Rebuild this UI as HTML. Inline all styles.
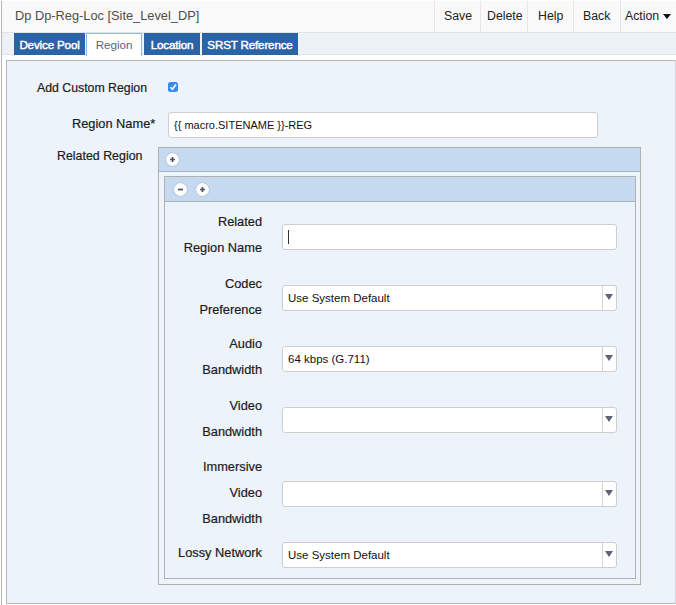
<!DOCTYPE html>
<html><head><meta charset="utf-8">
<style>
html,body{margin:0;padding:0;background:#fff;width:676px;height:605px;overflow:hidden;position:relative;font-family:"Liberation Sans",sans-serif;}
.a{position:absolute;}
#vline{left:1px;top:1px;width:1px;height:604px;background:#b4b4b4;}
#header{left:2px;top:1px;width:674px;height:31px;background:#f9f9f9;border-bottom:1px solid #e3e3e3;}
#title{left:15px;top:6px;font-size:12.8px;color:#4d4d4d;white-space:nowrap;line-height:20px;}
.sep{top:1px;width:1px;height:31px;background:#e4e6ea;}
.btn{top:6px;font-size:12.3px;color:#222;line-height:20px;white-space:nowrap;}
#tabbar{left:2px;top:33px;width:674px;height:21px;background:#ecf1f6;}
#tabline{left:2px;top:54px;width:674px;height:1px;background:#dde5ee;}
#tabwhite{left:2px;top:55px;width:674px;height:5px;background:#fff;}
.tab{top:33px;height:22px;background:#2b63a7;color:#fff;font-weight:normal;font-size:11.6px;line-height:23px;text-align:center;white-space:nowrap;letter-spacing:-0.15px;-webkit-text-stroke:0.45px #fff;}
#tabreg{left:86px;top:33px;width:54px;height:22px;background:#fff;border:1px solid #93b7de;border-bottom:none;color:#596373;font-size:11.6px;line-height:22px;text-align:center;}
#panel{left:6px;top:60px;width:668px;height:542px;background:#edf3fa;border:1px solid #b8b8b8;border-right-color:#d3d8de;}
.lbl{font-size:12.8px;color:#1c1c1c;-webkit-text-stroke:0.2px #1c1c1c;white-space:nowrap;text-align:right;}
.inp{background:#fff;border:1px solid #cfcfcf;border-radius:3px;box-sizing:border-box;}
.sel .arr{position:absolute;right:0;top:0;width:13px;height:100%;border-left:1px solid #d6d6d6;}
.sel .arr:after{content:"";position:absolute;left:2px;top:8px;border-left:4px solid transparent;border-right:4px solid transparent;border-top:6.5px solid #5d6378;}
.stext{position:absolute;left:5px;top:1px;font-size:11.5px;color:#111;white-space:nowrap;}
#obox{left:158px;top:147px;width:481px;height:435.5px;border:1px solid #b0b0b0;background:#eff4fa;box-sizing:content-box;}
#ohead{left:159px;top:148px;width:481px;height:23px;background:#c5daf1;border-bottom:1px solid #aab4be;}
#ibox{left:164px;top:176px;width:470px;height:401px;border:1px solid #b0b0b0;background:#edf3fa;}
#ihead{left:165px;top:177px;width:470px;height:24px;background:#c5daf1;border-bottom:1px solid #aab4be;}
.circ{width:13px;height:13px;border-radius:50%;background:#fff;box-shadow:0 0 1.5px rgba(0,0,0,.3);}
.circ svg{position:absolute;left:0;top:0;}
</style></head><body>
<div class="a" id="header"></div>
<div class="a" id="vline"></div>
<div class="a" id="title">Dp Dp-Reg-Loc [Site_Level_DP]</div>
<div class="a sep" style="left:434px"></div>
<div class="a sep" style="left:480px"></div>
<div class="a sep" style="left:527px"></div>
<div class="a sep" style="left:573px"></div>
<div class="a sep" style="left:620px"></div>
<div class="a btn" style="left:444px">Save</div>
<div class="a btn" style="left:487px">Delete</div>
<div class="a btn" style="left:538px">Help</div>
<div class="a btn" style="left:583px">Back</div>
<div class="a btn" style="left:625px">Action</div>
<div class="a" style="left:662.5px;top:14px;width:0;height:0;border-left:4px solid transparent;border-right:4px solid transparent;border-top:5px solid #111;"></div>

<div class="a" id="tabbar"></div>
<div class="a" id="tabline"></div>
<div class="a" id="tabwhite"></div>
<div class="a tab" style="left:14px;width:71px;">Device Pool</div>
<div class="a" id="tabreg">Region</div>
<div class="a tab" style="left:144px;width:56px;">Location</div>
<div class="a tab" style="left:202px;width:96px;">SRST Reference</div>

<div class="a" id="panel"></div>

<div class="a lbl" style="left:37px;top:78.5px;line-height:18px;font-size:12.3px">Add Custom Region</div>
<div class="a" style="left:168px;top:82px;width:10px;height:10px;border-radius:2.5px;background:#3a8bee;">
<svg width="10" height="10" viewBox="0 0 10 10" style="position:absolute;left:0;top:0"><path d="M2.4 5.3 L4.4 7.3 L7.9 2.6" fill="none" stroke="#fff" stroke-width="1.6"/></svg></div>

<div class="a lbl" style="left:72px;top:115px;line-height:18px">Region Name*</div>
<div class="a inp" style="left:168px;top:112px;width:430px;height:26px;">
<div class="stext" style="font-size:11px;line-height:23px;">{{ macro.SITENAME }}-REG</div></div>

<div class="a lbl" style="left:57px;top:147px;line-height:18px;font-size:12.4px">Related Region</div>

<div class="a" id="obox"></div>
<div class="a" id="ohead"></div>
<div class="a circ" style="left:166px;top:153px;">
<svg width="13" height="13"><path d="M4 6.5 H9 M6.5 4 V9" stroke="#4a5068" stroke-width="1.7"/></svg></div>
<div class="a" id="ibox"></div>
<div class="a" id="ihead"></div>
<div class="a circ" style="left:174px;top:183px;">
<svg width="13" height="13"><path d="M4 6.5 H9" stroke="#4a5068" stroke-width="1.7"/></svg></div>
<div class="a circ" style="left:196px;top:183px;">
<svg width="13" height="13"><path d="M4 6.5 H9 M6.5 4 V9" stroke="#4a5068" stroke-width="1.7"/></svg></div>

<!-- inner rows -->
<div class="a lbl" style="right:414px;top:209px;line-height:26px">Related<br>Region Name</div>
<div class="a inp" style="left:282px;top:224px;width:335px;height:26px;">
<div class="a" style="left:5px;top:5px;width:1px;height:14px;background:#333"></div></div>

<div class="a lbl" style="right:414px;top:271px;line-height:26px">Codec<br>Preference</div>
<div class="a inp sel" style="left:282px;top:285px;width:335px;height:26px;">
<div class="stext" style="line-height:23px">Use System Default</div><div class="arr"></div></div>

<div class="a lbl" style="right:414px;top:331px;line-height:26px">Audio<br>Bandwidth</div>
<div class="a inp sel" style="left:282px;top:346px;width:335px;height:26px;">
<div class="stext" style="line-height:23px">64 kbps (G.711)</div><div class="arr"></div></div>

<div class="a lbl" style="right:414px;top:393px;line-height:26px">Video<br>Bandwidth</div>
<div class="a inp sel" style="left:282px;top:407px;width:335px;height:26px;">
<div class="arr"></div></div>

<div class="a lbl" style="right:414px;top:454px;line-height:26px">Immersive<br>Video<br>Bandwidth</div>
<div class="a inp sel" style="left:282px;top:481px;width:335px;height:26px;">
<div class="arr"></div></div>

<div class="a lbl" style="right:414px;top:540px;line-height:26px">Lossy Network</div>
<div class="a inp sel" style="left:282px;top:542px;width:335px;height:26px;">
<div class="stext" style="line-height:23px">Use System Default</div><div class="arr"></div></div>

</body></html>
